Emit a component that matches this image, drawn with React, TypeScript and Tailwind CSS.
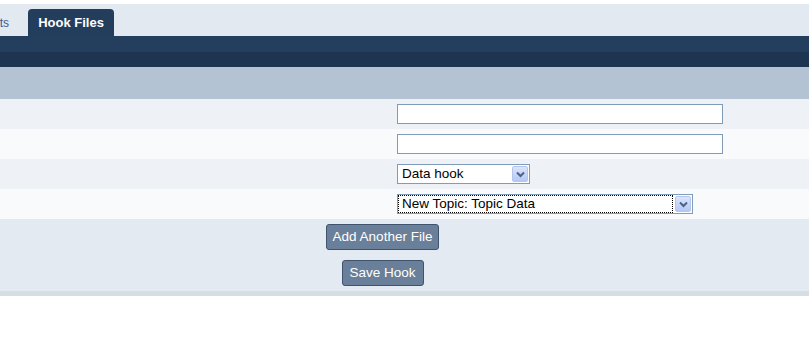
import React from "react";

const font = { fontFamily: '"Liberation Sans", Arial, sans-serif' };

const Arrow = () => (
  <div className="w-[16px] h-[16px] mr-[1px] rounded-[2px] border border-[#b4c6f0] bg-gradient-to-b from-[#dbe5fb] to-[#b5c8f5] flex items-center justify-center">
    <svg width="9" height="7" viewBox="0 0 9 7">
      <path d="M1 1.5 L4.5 5 L8 1.5" fill="none" stroke="#4d6185" strokeWidth="2" />
    </svg>
  </div>
);

const Select = ({
  value,
  width,
  focused,
}: {
  value: string;
  width: string;
  focused?: boolean;
}) => (
  <div
    className={`${width} h-[20px] bg-white border border-[#7f9db9] flex items-center justify-between`}
  >
    <span
      className={`h-full flex-1 flex items-center pl-[4px] text-[13.5px] text-black leading-none ${
        focused ? "outline outline-1 outline-dotted outline-black -outline-offset-1 mr-[2px]" : ""
      }`}
    >
      {value}
    </span>
    <Arrow />
  </div>
);

const Row = ({ bg, children }: { bg: string; children: React.ReactNode }) => (
  <div className={`h-[30px] flex items-center pl-[397px] ${bg}`}>{children}</div>
);

const Button = ({ label, width }: { label: string; width: string }) => (
  <button
    className={`${width} h-[26px] rounded-[3px] border border-[#3e536e] bg-[#6a7f99] text-white text-[13.5px] leading-none`}
    style={font}
  >
    {label}
  </button>
);

export default function App() {
  return (
    <div className="w-[809px] h-[339px] bg-white overflow-hidden" style={font}>
      <div className="h-[4px] bg-white" />
      <div className="h-[32px] bg-[#e3e9f1] flex items-end overflow-hidden">
        <span className="-ml-[40px] w-[49px] shrink-0 text-right text-[12px] text-[#3d5c8c] self-start mt-[10px] whitespace-nowrap">
          Imports
        </span>
        <div className="ml-[19px] w-[86px] h-[27px] rounded-t-[4px] bg-[#233e5c] text-white text-[13px] font-bold flex items-center justify-center">
          Hook Files
        </div>
      </div>
      <div className="h-[16px] bg-[#243f5e]" />
      <div className="h-[15px] bg-[#1e3552]" />
      <div className="h-[32px] bg-[#b3c3d4]" />
      <Row bg="bg-[#eef2f6]">
        <input className="w-[326px] h-[20px] bg-white border border-[#7f9db9] outline-none" />
      </Row>
      <Row bg="bg-[#f8fafc]">
        <input className="w-[326px] h-[20px] bg-white border border-[#7f9db9] outline-none" />
      </Row>
      <Row bg="bg-[#eef2f6]">
        <Select value="Data hook" width="w-[133px]" />
      </Row>
      <Row bg="bg-[#f8fafc]">
        <Select value="New Topic: Topic Data" width="w-[296px]" focused />
      </Row>
      <div className="h-[72px] bg-[#e4eaf2] w-full">
        <div className="w-[765px] flex flex-col items-center gap-[10px] pt-[5px]">
          <Button label="Add Another File" width="w-[113px]" />
          <Button label="Save Hook" width="w-[82px]" />
        </div>
      </div>
      <div className="h-[5px] bg-[#d5dde5]" />
    </div>
  );
}
